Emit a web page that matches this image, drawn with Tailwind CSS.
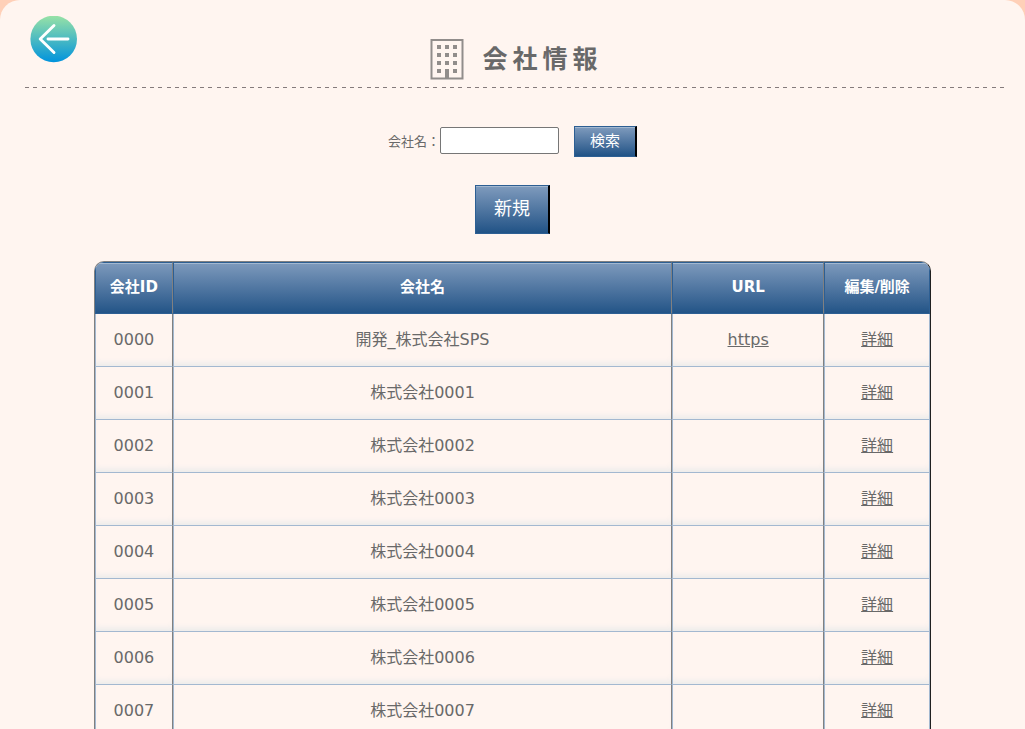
<!DOCTYPE html>
<html lang="ja">
<head>
  <meta charset="UTF-8" />
  <meta name="viewport" content="width=device-width, initial-scale=1.0" />
  <title>会社情報</title>
  <script src="https://cdn.jsdelivr.net/npm/@tailwindcss/browser@4"></script>
</head>

<body class="bg-[#ffd0b8] font-['DejaVu_Sans','Noto_Sans_CJK_JP',sans-serif] text-[#696969]">
  <div class="min-h-screen rounded-t-[20px] bg-[#fff5f0] px-5 pt-4">

    <!-- Header -->
    <header class="grid grid-cols-[1fr_auto_1fr] h-[71px]">
      <a href="#" aria-label="戻る" class="ml-[10px] block h-12 w-12">
        <svg class="h-12 w-12" viewBox="0 0 48 48" fill="none">
          <defs>
            <linearGradient id="back" x1="0" y1="0" x2="0" y2="1">
              <stop offset="0" stop-color="#98e2a6" />
              <stop offset="1" stop-color="#0093dd" />
            </linearGradient>
          </defs>
          <circle cx="23.7" cy="23" r="23.3" fill="url(#back)" />
          <path d="M24 9.5L10.2 23L24 36.5M18 23H38" stroke="#fff" stroke-width="2.9" stroke-linecap="round" stroke-linejoin="round" />
        </svg>
      </a>
      <div class="flex items-center gap-4 pt-4 pl-2">
        <svg class="h-[42px] w-[34px]" viewBox="0 0 34 42" fill="#918d8b">
          <path fill-rule="evenodd" d="M.5 0H33.5V40.5H.5ZM2.500 2V38.500H31.500V2Z" />
          <path d="M7 6h4v4H7zM15 6h4v4H15zM23 6h4v4H23zM7 14h4v4H7zM15 14h4v4H15zM23 14h4v4H23zM7 22h4v4H7zM15 22h4v4H15zM23 22h4v4H23zM7 30h4v4H7zM15 30h4v9H15zM23 30h4v4H23z" />
        </svg>
        <h1 class="pl-[2px] text-[25px] leading-8 font-bold tracking-[5px]">会社情報</h1>
      </div>
    </header>
    <div class="ml-[5px] h-px bg-[repeating-linear-gradient(90deg,#857b7c_0_4px,transparent_4px_8px,#857b7c_8px_12px,transparent_12px_17px,#857b7c_17px_21px,transparent_21px_25px)]"></div>

    <main>
      <!-- Search -->
      <form class="mt-[38px] flex items-center justify-center">
        <label for="company" class="text-[13px] leading-5">会社名：</label>
        <input id="company" type="text" class="mb-[2px] h-[27px] w-[119px] rounded-[2px] border border-[#767676] bg-white px-1 text-[13px]" />
        <button type="submit" class="ml-[15px] h-[31px] w-[63px] border border-r-2 border-[#2d5f93] border-r-black bg-linear-to-b from-[#7f9bbd] to-[#205386] pb-[2px] text-[15px] leading-5 text-white shadow-[inset_0_1px_0_#a3b8d0]">検索</button>
      </form>

      <div class="mt-7 flex justify-center">
        <button type="button" class="h-[49px] w-[75px] border border-r-2 border-[#2d5f93] border-r-black bg-linear-to-b from-[#7f9bbd] to-[#205386] pb-[2px] text-lg leading-6 text-white shadow-[inset_0_1px_0_#a3b8d0]">新規</button>
      </div>

      <!-- Company list -->
      <div class="mx-auto mt-[27px] w-[85%] overflow-hidden rounded-t-[10px] border border-b-0 border-[#808080] border-r-[#202020]">
        <table class="w-full table-fixed border-separate border-spacing-0 text-center">
          <colgroup>
            <col class="w-[78px]" />
            <col />
            <col class="w-[152px]" />
            <col class="w-[106px]" />
          </colgroup>
          <thead class="bg-linear-to-b from-[#7f9bbd] to-[#205386] text-[15px] leading-5 text-white [&_th]:h-[52px] [&_th]:border [&_th]:border-[#2d5f93] [&_th]:border-r-[#808080] [&_th]:pb-[2px] [&_th]:shadow-[inset_0_1px_0_#a3b8d0] [&_th:last-child]:border-r-[#2d5f93]">
            <tr>
              <th>会社ID</th>
              <th>会社名</th>
              <th>URL</th>
              <th>編集/削除</th>
            </tr>
          </thead>
          <tbody class="text-base [&_td]:h-[53px] [&_td]:border-x [&_td]:border-b [&_td]:border-[#a3b8d0] [&_td]:border-r-[#808080] [&_td]:shadow-[inset_0_-6px_6px_-3px_#ebebeb] [&_td:last-child]:border-r-[#a3b8d0]">
            <tr><td>0000</td><td>開発_株式会社SPS</td><td><a href="#" class="underline">https</a></td><td><a href="#" class="underline">詳細</a></td></tr>
            <tr><td>0001</td><td>株式会社0001</td><td></td><td><a href="#" class="underline">詳細</a></td></tr>
            <tr><td>0002</td><td>株式会社0002</td><td></td><td><a href="#" class="underline">詳細</a></td></tr>
            <tr><td>0003</td><td>株式会社0003</td><td></td><td><a href="#" class="underline">詳細</a></td></tr>
            <tr><td>0004</td><td>株式会社0004</td><td></td><td><a href="#" class="underline">詳細</a></td></tr>
            <tr><td>0005</td><td>株式会社0005</td><td></td><td><a href="#" class="underline">詳細</a></td></tr>
            <tr><td>0006</td><td>株式会社0006</td><td></td><td><a href="#" class="underline">詳細</a></td></tr>
            <tr><td>0007</td><td>株式会社0007</td><td></td><td><a href="#" class="underline">詳細</a></td></tr>
          </tbody>
        </table>
      </div>
    </main>
  </div>
</body>
</html>
